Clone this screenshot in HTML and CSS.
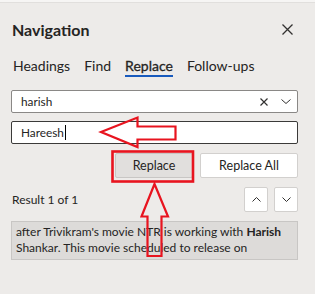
FILE: index.html
```html
<!DOCTYPE html>
<html>
<head>
<meta charset="utf-8">
<link rel="stylesheet" href="styles.css">
</head>
<body>
<div class="pane">
  <div class="topband"></div>
  <div class="header">
    <span class="title">Navigation</span>
    <svg class="close" width="11" height="11" viewBox="0 0 11 11"><path d="M0.5 0.5L10.5 10.5M10.5 0.5L0.5 10.5" stroke="#323130" stroke-width="1.3" fill="none"/></svg>
  </div>
  <div class="tabs">
    <span class="tab">Headings</span>
    <span class="tab">Find</span>
    <span class="tab active">Replace</span>
    <span class="tab">Follow-ups</span>
  </div>
  <div class="field">
    <span class="val">harish</span>
    <svg class="clr" width="8" height="8" viewBox="0 0 8 8"><path d="M0.5 0.5L7.5 7.5M7.5 0.5L0.5 7.5" stroke="#323130" stroke-width="1.2" fill="none"/></svg>
    <svg class="chev" width="10" height="5" viewBox="0 0 10 5"><path d="M0.5 0.5L5 4.5L9.5 0.5" stroke="#323130" stroke-width="1" fill="none"/></svg>
  </div>
  <div class="field focus">
    <span class="val">Hareesh</span><span class="caret"></span>
  </div>
  <div class="btnrow">
    <button class="btn primary">Replace</button>
    <button class="btn">Replace All</button>
  </div>
  <div class="resrow">
    <span class="count">Result 1 of 1</span>
    <div class="navbtns">
      <span class="nb"><svg width="9" height="5" viewBox="0 0 9 5"><path d="M0.5 4.5L4.5 0.5L8.5 4.5" stroke="#323130" stroke-width="1" fill="none"/></svg></span>
      <span class="nb"><svg width="9" height="5" viewBox="0 0 9 5"><path d="M0.5 0.5L4.5 4.5L8.5 0.5" stroke="#323130" stroke-width="1" fill="none"/></svg></span>
    </div>
  </div>
  <div class="snippet">after Trivikram's movie NTR is working with <b>Harish</b> Shankar. This movie scheduled to release on</div>
  <svg class="marks" width="315" height="294" viewBox="0 0 315 294">
    <polygon points="101,132 137.5,117.5 137.5,126.5 175.5,126.5 175.5,139.5 137.5,139.5 137.5,147" fill="none" stroke="#e8141f" stroke-width="2.2" stroke-linejoin="miter"/>
    <rect x="112.5" y="151.5" width="80.5" height="30" fill="none" stroke="#e8141f" stroke-width="2.6"/>
    <polygon points="154.5,184 168,216.5 161.5,216.5 161.5,256 147.5,256 147.5,216.5 141.5,216.5" fill="none" stroke="#e8141f" stroke-width="2.2"/>
  </svg>
</div>
</body>
</html>
```
FILE: styles.css
```css
html, body { margin: 0; padding: 0; }
body {
  width: 315px; height: 294px; overflow: hidden;
  background: #edebe9;
  font-family: Lato, "Open Sans", sans-serif;
  color: #252423;
}
.pane { position: relative; width: 315px; height: 294px; }
.topband { height: 3px; background: #f6f5f4; border-bottom: 1px solid #e1dfdd; box-sizing: border-box; }
.header {
  display: flex; justify-content: space-between; align-items: center;
  padding: 17px 22px 0 12px; height: 20px;
}
.title { font-size: 16px; font-weight: 700; line-height: 20px; }
.close { margin-top: -2px; }
.tabs { display: flex; gap: 14px; padding: 17px 0 0 13px; height: 20px; }
.tab { font-size: 14px; line-height: 18px; height: 18px; }
.tab.active { border-bottom: 2px solid #185abd; height: 18px; -webkit-text-stroke: 0.3px #252423; }
.field {
  margin: 13px 17px 0 11px; height: 23px; box-sizing: border-box;
  border: 1px solid #8a8886; border-radius: 2px; background: #fff;
  display: flex; align-items: center; padding: 0 6px 0 9px;
  font-size: 11.8px;
}
.field + .field { margin-top: 8px; }
.field.focus { border-color: #3b3a39; }
.field .clr { margin-left: auto; margin-right: 13px; }
.caret { width: 1px; height: 15px; background: #000; margin-left: 1px; }
.btnrow { display: flex; justify-content: flex-end; gap: 7px; margin: 9px 17px 0 0; }
.btn {
  font-family: inherit; font-size: 12.5px; color: #252423;
  height: 25px; box-sizing: border-box; border: 1px solid #d2d0ce;
  background: #fff; border-radius: 2px; padding: 0;
}
.btn.primary { width: 78px; background: #e1dfdd; border-color: #c8c6c4; }
.btn:not(.primary) { width: 98px; }
.resrow { display: flex; justify-content: space-between; align-items: center; margin: 9px 17px 0 12px; }
.count { font-size: 12px; }
.navbtns { display: flex; gap: 6px; }
.nb {
  width: 24px; height: 25px; box-sizing: border-box; background: #fff;
  border: 1px solid #d2d0ce; border-radius: 2px;
  display: flex; align-items: center; justify-content: center;
}
.snippet {
  margin: 9px 17px 0 11px; background: #dddbd9; border: 1px solid #c8c6c4;
  font-size: 12px; line-height: 16px; padding: 2px 4px 3px; height: 32px;
}
.snippet b { font-weight: 700; }
.marks { position: absolute; left: 0; top: 0; pointer-events: none; }
```
